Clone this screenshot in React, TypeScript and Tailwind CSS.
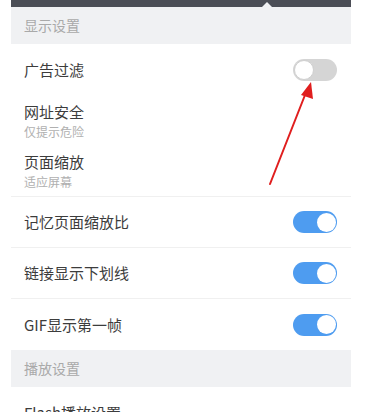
import React from "react";

function Toggle({ on }: { on: boolean }) {
  return on ? (
    <div className="w-[44px] h-[22px] rounded-full bg-[#4e9cf0] flex items-center justify-end pr-[1px]">
      <div className="w-[19px] h-[19px] rounded-full bg-white" />
    </div>
  ) : (
    <div className="w-[44px] h-[22px] rounded-full bg-[#d5d5d5] flex items-center justify-start pl-[1px]">
      <div className="w-[20px] h-[20px] rounded-full bg-white border border-[#cfcfcf]" />
    </div>
  );
}

function Header({ title }: { title: string }) {
  return (
    <div className="h-[37px] bg-[#f0f1f3] flex items-center pl-[13px] text-[14px] text-[#a9a9a9]">
      {title}
    </div>
  );
}

function Row({
  title,
  sub,
  toggle,
  border,
}: {
  title: string;
  sub?: string;
  toggle?: boolean;
  border?: boolean;
}) {
  return (
    <div
      className={
        "h-[51px] flex items-center justify-between pl-[13px] pr-[14px] " +
        (border ? "border-b border-[#f0f0f0]" : "")
      }
    >
      <div className="flex flex-col">
        <div className="text-[15px] leading-[20px] text-[#3c3c3c]">{title}</div>
        {sub && (
          <div className="text-[12px] leading-[17px] text-[#b0b0b0] mt-[1px]">{sub}</div>
        )}
      </div>
      {toggle !== undefined && <Toggle on={toggle} />}
    </div>
  );
}

export default function App() {
  return (
    <div
      className="relative w-[384px] h-[412px] overflow-hidden bg-white"
      style={{ fontFamily: '"Noto Sans CJK SC", "Noto Sans", sans-serif' }}
    >
      <div className="ml-[11px] w-[340px]">
        <div className="relative h-[7px] bg-[#4b4e56]">
          <div className="absolute left-[251px] top-[2px] w-0 h-0 border-l-[5px] border-r-[5px] border-b-[5px] border-l-transparent border-r-transparent border-b-[#f0f1f3]" />
        </div>
        <Header title="显示设置" />
        <Row title="广告过滤" toggle={false} />
        <Row title="网址安全" sub="仅提示危险" />
        <Row title="页面缩放" sub="适应屏幕" border />
        <Row title="记忆页面缩放比" toggle={true} border />
        <Row title="链接显示下划线" toggle={true} border />
        <Row title="GIF显示第一帧" toggle={true} />
        <Header title="播放设置" />
        <Row title="Flash播放设置" />
      </div>
      <svg
        className="absolute left-0 top-0"
        width="384"
        height="412"
        viewBox="0 0 384 412"
      >
        <line x1="270" y1="184" x2="305" y2="95" stroke="#e01e1e" strokeWidth="2" strokeLinecap="round" />
        <polygon points="311,82 313,99 301,95" fill="#e01e1e" />
      </svg>
    </div>
  );
}
